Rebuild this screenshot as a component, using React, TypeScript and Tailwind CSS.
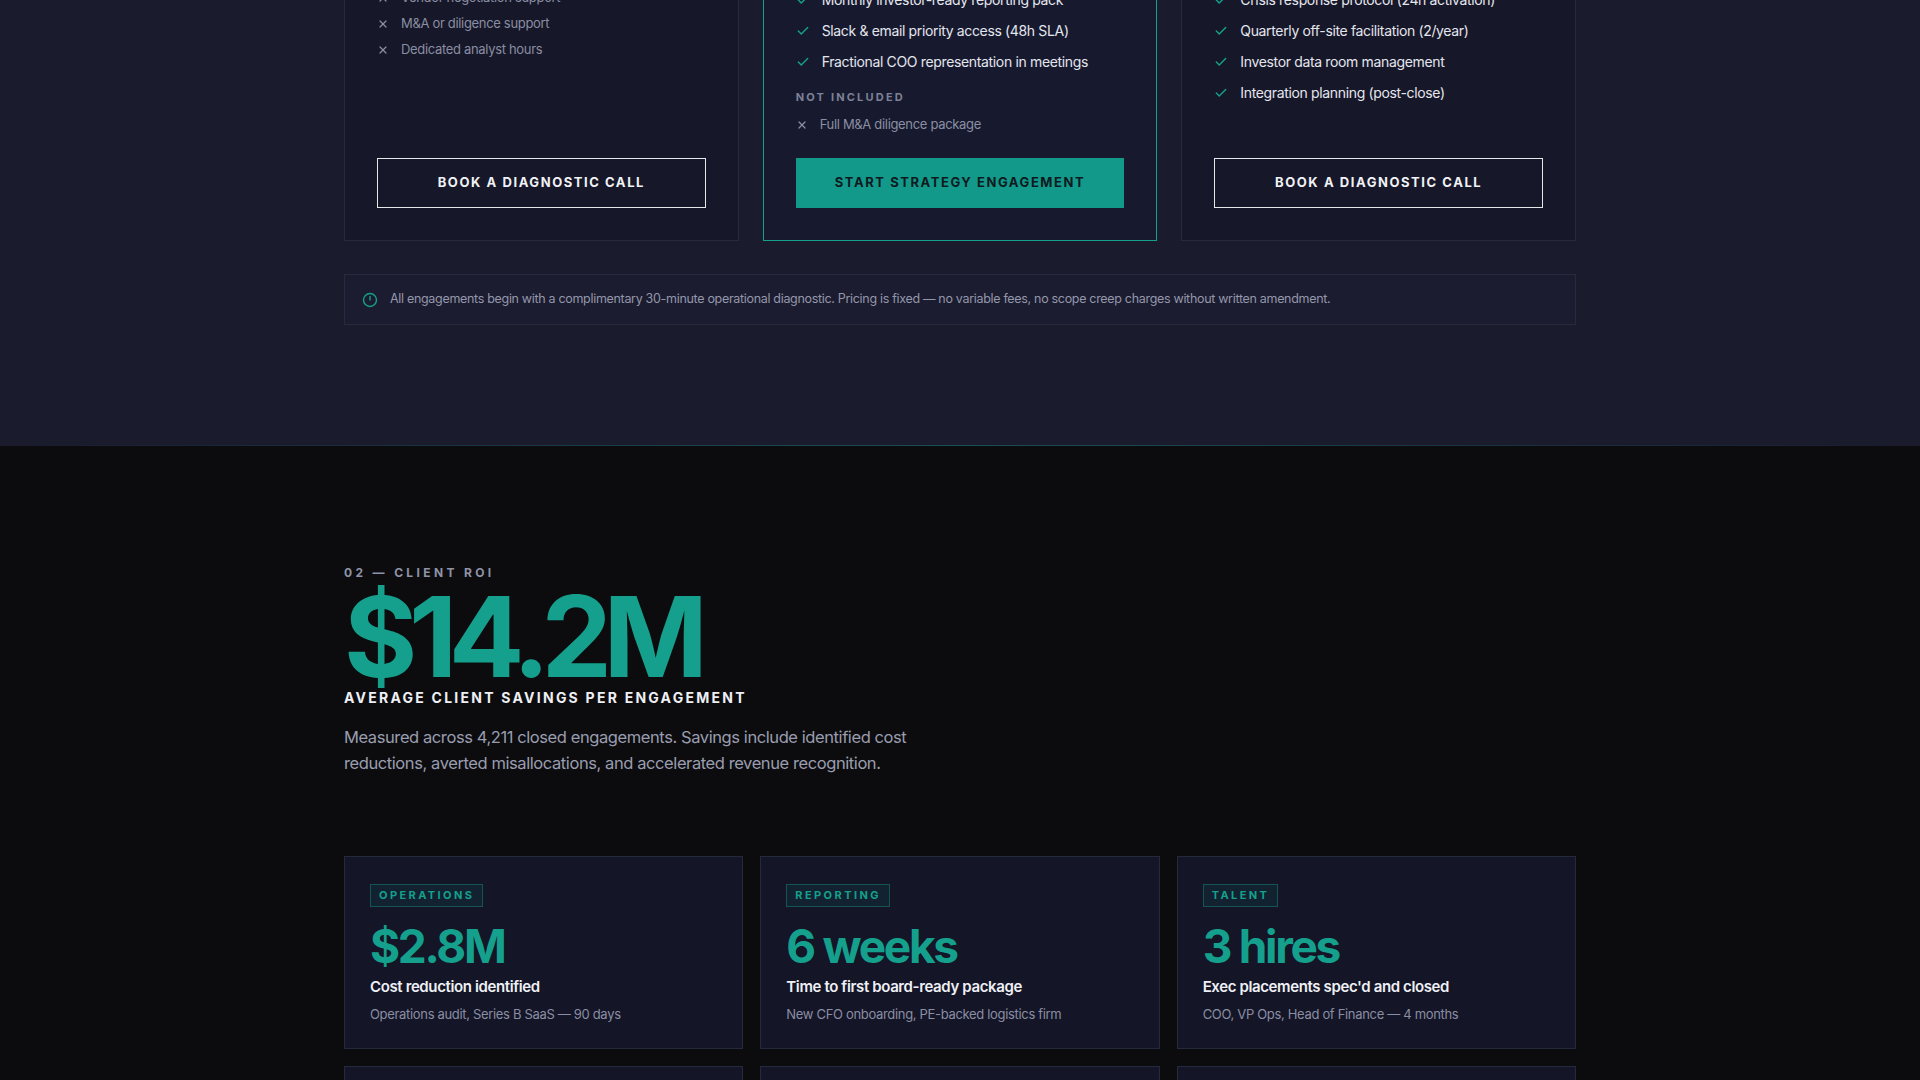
import { Check, X } from "lucide-react";

const font = { fontFamily: "Inter, 'Noto Sans', sans-serif" };

function Yes({ text }: { text: string }) {
  return (
    <li className="flex items-center gap-3 h-[31px] text-[14px] text-[#e4e6ee]">
      <Check size={14} strokeWidth={2.5} className="text-[#14a08c] shrink-0" />
      <span className="tracking-[-0.025em]">{text}</span>
    </li>
  );
}

function No({ text, h = "h-[26px]" }: { text: string; h?: string }) {
  return (
    <li className={`flex items-center gap-3 ${h} text-[13px] text-[#8a8ea3]`}>
      <X size={12} strokeWidth={2.5} className="text-[#8a8ea3] shrink-0" />
      <span className="tracking-[-0.025em]">{text}</span>
    </li>
  );
}

const roi = [
  { tag: "OPERATIONS", value: "$2.8M", label: "Cost reduction identified", sub: "Operations audit, Series B SaaS — 90 days" },
  { tag: "REPORTING", value: "6 weeks", label: "Time to first board-ready package", sub: "New CFO onboarding, PE-backed logistics firm" },
  { tag: "TALENT", value: "3 hires", label: "Exec placements spec'd and closed", sub: "COO, VP Ops, Head of Finance — 4 months" },
  { tag: "FINANCE", value: "$1.1M", label: "Working capital released", sub: "Receivables cleanup, manufacturing group" },
  { tag: "SYSTEMS", value: "11 tools", label: "Consolidated into one stack", sub: "Ops tooling review, healthcare network" },
  { tag: "M&A", value: "2 deals", label: "Closed with clean diligence", sub: "Buy-side support, family office" },
];

export default function App() {
  return (
    <div style={font} className="min-h-screen bg-[#0c0c0e] overflow-hidden">
      {/* pricing tail */}
      <section className="bg-[#1a1b2d] overflow-hidden pb-[121px] relative">
        <div className="w-[1232px] mx-auto">
          <div className="grid grid-cols-3 gap-6 -mt-[80px]">
            <div className="border border-[#262a3e] bg-[#161728] p-8 flex flex-col">
              <div className="h-8 text-[11px] font-bold tracking-[0.2em] text-[#6b7088]">NOT INCLUDED</div>
              <ul>
                <No text="Vendor negotiation support" />
                <No text="M&A or diligence support" />
                <No text="Dedicated analyst hours" />
              </ul>
              <button className="mt-auto h-[50px] border border-[#e5e7eb] text-[#f1f2f6] text-[13px] font-bold tracking-[0.12em]">
                BOOK A DIAGNOSTIC CALL
              </button>
            </div>
            <div className="border border-[#14a08c] bg-[#171a2e] p-8 flex flex-col">
              <ul>
                <Yes text="Weekly operating cadence review" />
                <Yes text="Monthly investor-ready reporting pack" />
                <Yes text="Slack & email priority access (48h SLA)" />
                <Yes text="Fractional COO representation in meetings" />
              </ul>
              <div className="mt-3 h-4 text-[11px] font-bold tracking-[0.2em] text-[#7d8197]">NOT INCLUDED</div>
              <ul className="mt-1">
                <No text="Full M&A diligence package" h="h-[31px]" />
              </ul>
              <button className="mt-[18px] h-[50px] bg-[#12998a] text-[#0f1a1f] text-[13px] font-bold tracking-[0.12em]">
                START STRATEGY ENGAGEMENT
              </button>
            </div>
            <div className="border border-[#262a3e] bg-[#161728] p-8 flex flex-col">
              <ul>
                <Yes text="Board-level reporting and prep" />
                <Yes text="Crisis response protocol (24h activation)" />
                <Yes text="Quarterly off-site facilitation (2/year)" />
                <Yes text="Investor data room management" />
                <Yes text="Integration planning (post-close)" />
              </ul>
              <button className="mt-auto h-[50px] border border-[#e5e7eb] text-[#f1f2f6] text-[13px] font-bold tracking-[0.12em]">
                BOOK A DIAGNOSTIC CALL
              </button>
            </div>
          </div>

          <div className="mt-[33px] h-[51px] border border-[#252a3c] bg-[#1b1c2f] flex items-center gap-3 px-[17px]">
            <svg width="16" height="16" viewBox="0 0 16 16" fill="none" stroke="#14a08c" strokeWidth="1.4" strokeLinecap="round">
              <circle cx="8" cy="8" r="6.5" />
              <path d="M8 4.5v3.5" />
            </svg>
            <p className="text-[12.5px] text-[#9497ab] tracking-[-0.025em]">
              All engagements begin with a complimentary 30-minute operational diagnostic. Pricing is fixed — no variable fees, no scope creep charges without written amendment.
            </p>
          </div>
        </div>
        <div className="absolute bottom-0 left-0 right-0 h-px bg-gradient-to-r from-transparent via-[#14a08c]/40 to-transparent" />
      </section>

      {/* client roi */}
      <section className="pt-[119px]">
        <div className="w-[1232px] mx-auto">
          <div className="text-[12px] leading-[15px] font-bold tracking-[0.28em] text-[#8f93a8]">02 — CLIENT ROI</div>
          <div className="text-[112px] leading-none font-bold tracking-[-0.075em] text-[#14a08c]">$14.2M</div>
          <div className="-mt-[4px] text-[14px] leading-5 font-bold tracking-[0.16em] text-[#eef0f5]">
            AVERAGE CLIENT SAVINGS PER ENGAGEMENT
          </div>
          <p className="mt-4 max-w-[600px] text-[16.5px] leading-[26px] text-[#9a9db0] tracking-[-0.025em]">
            Measured across 4,211 closed engagements. Savings include identified cost reductions, averted misallocations, and accelerated revenue recognition.
          </p>

          <div className="mt-[80px] grid grid-cols-3 gap-x-[17px] gap-y-[17px]">
            {roi.map((r) => (
              <div key={r.tag} className="border border-[#232a3c] bg-[#141527] px-[25px] pt-[24px] pb-[25px]">
                <span className="inline-flex items-center h-[23px] px-2 border border-[#14a08c]/40 bg-[#14a08c]/10 text-[11px] font-bold tracking-[0.22em] text-[#14a08c]">
                  {r.tag}
                </span>
                <div className="mt-4 text-[46px] leading-none font-bold tracking-[-0.05em] text-[#14a08c]">{r.value}</div>
                <div className="mt-2 text-[15px] leading-5 font-semibold tracking-[-0.025em] text-[#eef0f5]">{r.label}</div>
                <div className="mt-2 text-[13px] leading-[18px] text-[#8a8ea3] tracking-[-0.025em]">{r.sub}</div>
              </div>
            ))}
          </div>
        </div>
      </section>
    </div>
  );
}
